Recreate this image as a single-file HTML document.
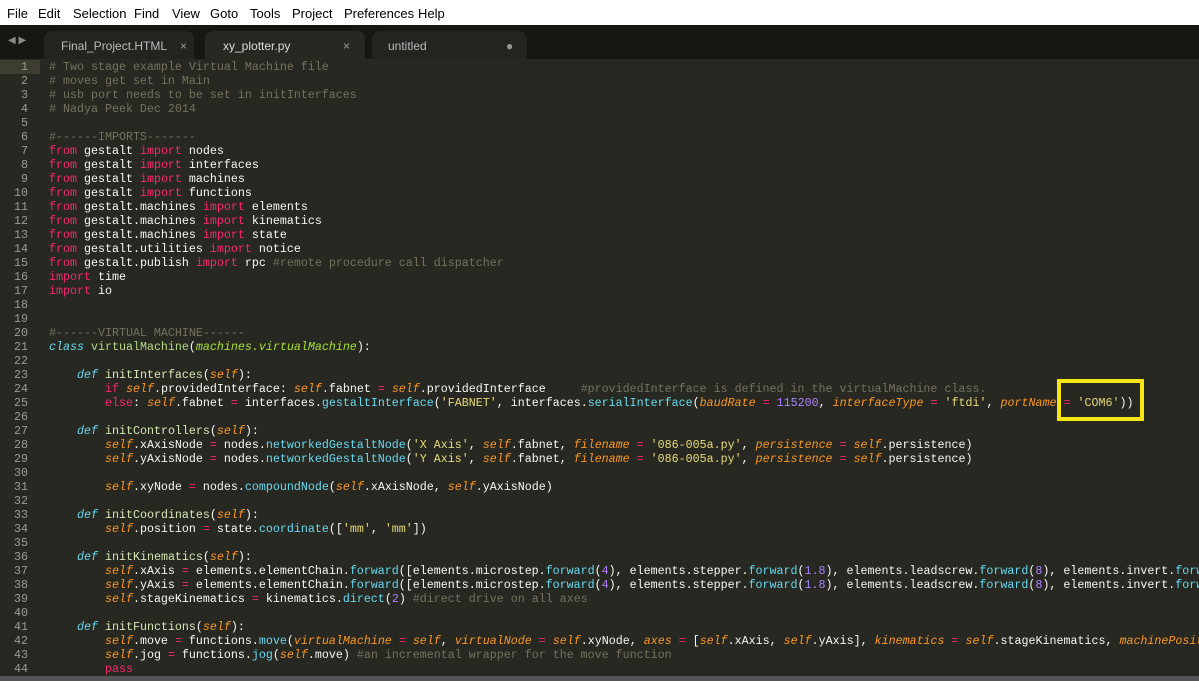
<!DOCTYPE html>
<html><head><meta charset="utf-8"><style>
body{margin:0;width:1199px;height:681px;overflow:hidden;background:#272822;font-family:"Liberation Sans",sans-serif;position:relative}
#menu{position:absolute;left:0;top:0;width:1199px;height:25px;background:#fff;font-size:13px;color:#000}
#menu span{position:absolute;top:6px}
#tabs{position:absolute;left:0;top:25px;width:1199px;height:34px;background:#161713}
.tab{position:absolute;top:6px;height:28px;background:#2c2d28;border-radius:8px 8px 0 0;font-size:12px;color:#bbb}
.tab span{position:absolute;top:8px}
#gut{position:absolute;left:0;top:60px;width:28px;font-family:"Liberation Mono",monospace;font-size:11.67px;line-height:14px;color:#9a9b94;text-align:right}
#code{position:absolute;left:49px;top:60px;width:1150px;overflow:hidden;font-family:"Liberation Mono",monospace;font-size:11.67px;line-height:14px;color:#f8f8f2;white-space:pre}
.k{color:#f92672}.f{color:#66d9ef}.s{color:#fd971f;font-style:italic}.c{color:#75715e}.t{color:#e6db74}.n{color:#ae81ff}.d{color:#66d9ef;font-style:italic}.a{color:#fd971f;font-style:italic}.i{color:#a6e22e;font-style:italic}.fn{color:#d4e8b4}.cn{color:#b4d884}
</style></head><body>
<div id="menu"><span style="left:7px">File</span><span style="left:38px">Edit</span><span style="left:73px">Selection</span><span style="left:134px">Find</span><span style="left:172px">View</span><span style="left:210px">Goto</span><span style="left:250px">Tools</span><span style="left:292px">Project</span><span style="left:344px">Preferences</span><span style="left:418px">Help</span></div>
<div id="tabs">
<div style="position:absolute;left:8px;top:10px;color:#888;font-size:10px">◀ ▶</div>
<div class="tab" style="left:44px;width:150px;background:#23241f"><span style="left:17px">Final_Project.HTML</span><span style="left:136px;color:#999">×</span></div>
<div class="tab" style="left:205px;width:160px;background:#272822"><span style="left:18px;color:#ddd">xy_plotter.py</span><span style="left:138px;color:#999">×</span></div>
<div class="tab" style="left:372px;width:155px;background:#23241f"><span style="left:16px">untitled</span><span style="left:134px;color:#999">●</span></div>
</div>
<div style="position:absolute;left:0;top:60px;width:40px;height:14px;background:#3e3d32"></div>
<div style="position:absolute;left:0;top:676px;width:1199px;height:5px;background:#555"></div>
<div id="gut"></div>
<div id="code"><span class="c"># Two stage example Virtual Machine file</span>
<span class="c"># moves get set in Main</span>
<span class="c"># usb port needs to be set in initInterfaces</span>
<span class="c"># Nadya Peek Dec 2014</span>

<span class="c">#------IMPORTS-------</span>
<span class="k">from</span> gestalt <span class="k">import</span> nodes
<span class="k">from</span> gestalt <span class="k">import</span> interfaces
<span class="k">from</span> gestalt <span class="k">import</span> machines
<span class="k">from</span> gestalt <span class="k">import</span> functions
<span class="k">from</span> gestalt.machines <span class="k">import</span> elements
<span class="k">from</span> gestalt.machines <span class="k">import</span> kinematics
<span class="k">from</span> gestalt.machines <span class="k">import</span> state
<span class="k">from</span> gestalt.utilities <span class="k">import</span> notice
<span class="k">from</span> gestalt.publish <span class="k">import</span> rpc <span class="c">#remote procedure call dispatcher</span>
<span class="k">import</span> time
<span class="k">import</span> io


<span class="c">#------VIRTUAL MACHINE------</span>
<span class="d">class</span> <span class="cn">virtualMachine</span>(<span class="i">machines.virtualMachine</span>):

    <span class="d">def</span> <span class="fn">initInterfaces</span>(<span class="s">self</span>):
        <span class="k">if</span> <span class="s">self</span>.providedInterface: <span class="s">self</span>.fabnet <span class="k">=</span> <span class="s">self</span>.providedInterface     <span class="c">#providedInterface is defined in the virtualMachine class.</span>
        <span class="k">else</span>: <span class="s">self</span>.fabnet <span class="k">=</span> interfaces.<span class="f">gestaltInterface</span>(<span class="t">'FABNET'</span>, interfaces.<span class="f">serialInterface</span>(<span class="a">baudRate</span> <span class="k">=</span> <span class="n">115200</span>, <span class="a">interfaceType</span> <span class="k">=</span> <span class="t">'ftdi'</span>, <span class="a">portName</span> <span class="k">=</span> <span class="t">'COM6'</span>))

    <span class="d">def</span> <span class="fn">initControllers</span>(<span class="s">self</span>):
        <span class="s">self</span>.xAxisNode <span class="k">=</span> nodes.<span class="f">networkedGestaltNode</span>(<span class="t">'X Axis'</span>, <span class="s">self</span>.fabnet, <span class="a">filename</span> <span class="k">=</span> <span class="t">'086-005a.py'</span>, <span class="a">persistence</span> <span class="k">=</span> <span class="s">self</span>.persistence)
        <span class="s">self</span>.yAxisNode <span class="k">=</span> nodes.<span class="f">networkedGestaltNode</span>(<span class="t">'Y Axis'</span>, <span class="s">self</span>.fabnet, <span class="a">filename</span> <span class="k">=</span> <span class="t">'086-005a.py'</span>, <span class="a">persistence</span> <span class="k">=</span> <span class="s">self</span>.persistence)

        <span class="s">self</span>.xyNode <span class="k">=</span> nodes.<span class="f">compoundNode</span>(<span class="s">self</span>.xAxisNode, <span class="s">self</span>.yAxisNode)

    <span class="d">def</span> <span class="fn">initCoordinates</span>(<span class="s">self</span>):
        <span class="s">self</span>.position <span class="k">=</span> state.<span class="f">coordinate</span>([<span class="t">'mm'</span>, <span class="t">'mm'</span>])

    <span class="d">def</span> <span class="fn">initKinematics</span>(<span class="s">self</span>):
        <span class="s">self</span>.xAxis <span class="k">=</span> elements.elementChain.<span class="f">forward</span>([elements.microstep.<span class="f">forward</span>(<span class="n">4</span>), elements.stepper.<span class="f">forward</span>(<span class="n">1.8</span>), elements.leadscrew.<span class="f">forward</span>(<span class="n">8</span>), elements.invert.<span class="f">forward</span>(<span class="n">True</span>)])
        <span class="s">self</span>.yAxis <span class="k">=</span> elements.elementChain.<span class="f">forward</span>([elements.microstep.<span class="f">forward</span>(<span class="n">4</span>), elements.stepper.<span class="f">forward</span>(<span class="n">1.8</span>), elements.leadscrew.<span class="f">forward</span>(<span class="n">8</span>), elements.invert.<span class="f">forward</span>(<span class="n">True</span>)])
        <span class="s">self</span>.stageKinematics <span class="k">=</span> kinematics.<span class="f">direct</span>(<span class="n">2</span>) <span class="c">#direct drive on all axes</span>

    <span class="d">def</span> <span class="fn">initFunctions</span>(<span class="s">self</span>):
        <span class="s">self</span>.move <span class="k">=</span> functions.<span class="f">move</span>(<span class="a">virtualMachine</span> <span class="k">=</span> <span class="s">self</span>, <span class="a">virtualNode</span> <span class="k">=</span> <span class="s">self</span>.xyNode, <span class="a">axes</span> <span class="k">=</span> [<span class="s">self</span>.xAxis, <span class="s">self</span>.yAxis], <span class="a">kinematics</span> <span class="k">=</span> <span class="s">self</span>.stageKinematics, <span class="a">machinePosition</span> <span class="k">=</span> <span class="s">self</span>.position)
        <span class="s">self</span>.jog <span class="k">=</span> functions.<span class="f">jog</span>(<span class="s">self</span>.move) <span class="c">#an incremental wrapper for the move function</span>
        <span class="k">pass</span></div>
<div style="position:absolute;left:1057px;top:379px;width:87px;height:42px;border:4px solid #f5e614;box-sizing:border-box"></div>
<script>
var g=document.getElementById('gut'),h='';for(var i=1;i<=44;i++)h+=i+'<br>';g.innerHTML=h;
</script>
</body></html>
